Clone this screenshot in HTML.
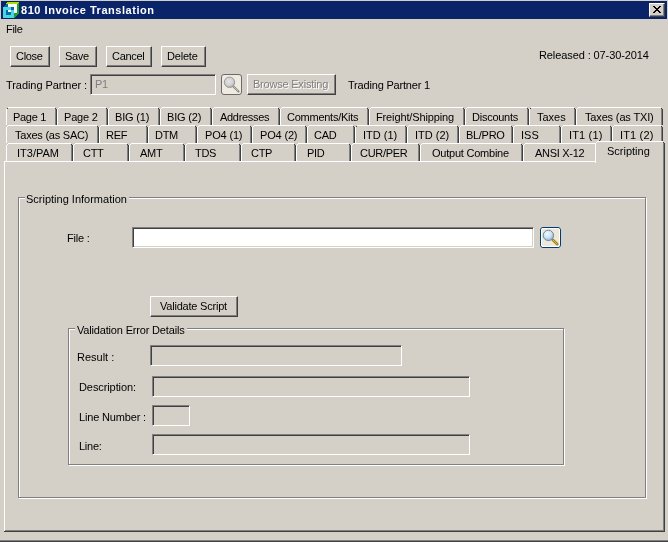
<!DOCTYPE html>
<html><head><meta charset="utf-8"><style>
html,body{margin:0;padding:0;}
html{background:#D4D0C8;overflow:hidden;}
body{width:668px;height:542px;overflow:hidden;background:#D4D0C8;position:relative;font-family:'Liberation Sans',sans-serif;font-size:11px;}
body>*{position:absolute;box-sizing:border-box;}
.t{white-space:pre;line-height:13px;font-size:11px;will-change:transform;}
.btn{background:#D4D0C8;border-top:1px solid #fff;border-left:1px solid #fff;border-right:1px solid #404040;border-bottom:1px solid #404040;box-shadow:inset -1px -1px 0 #808080;}
.fld{border-top:1px solid #808080;border-left:1px solid #808080;border-right:1px solid #fff;border-bottom:1px solid #fff;box-shadow:inset 1px 1px 0 #404040, inset -1px -1px 0 #D4D0C8;}
.tab{background:#D4D0C8;border-top:1px solid #fff;border-left:1px solid #fff;border-right:1px solid #404040;box-shadow:inset -1px 0 0 #808080;border-top-left-radius:2px;}
.panel{background:#D4D0C8;border-top:1px solid #fff;border-left:1px solid #fff;border-right:1px solid #404040;border-bottom:1px solid #404040;box-shadow:inset -1px -1px 0 #808080;}
</style></head><body>
<div style="left:1px;top:1px;width:666px;height:18px;background:#0A246A;"></div>
<svg style="left:3px;top:2px" width="16" height="16" viewBox="3 2 16 16" shape-rendering="crispEdges">
<polygon points="7,2 19,2 17,4 5,4" fill="#A8E000"/>
<polygon points="17,4 19,2 19,13 14,18 14,13 17,13" fill="#18A030"/>
<rect x="8" y="4" width="9" height="9" fill="#fff"/>
<polygon points="3,7 6,4 8,4 8,7" fill="#0868A8"/>
<rect x="3" y="7" width="11" height="11" fill="#48D8E0"/>
<rect x="6" y="10" width="5" height="5" fill="#0868A8"/>
<rect x="8" y="10" width="3" height="2" fill="#fff"/>
<rect x="11" y="7" width="3" height="3" fill="#0868A8"/>
</svg>
<span class="t" style="left:21.0px;top:4px;color:#fff;font-weight:bold;letter-spacing:0.545px;">810 Invoice Translation</span>
<div class="btn" style="left:649px;top:3px;width:16px;height:14px"></div>
<svg style="left:649px;top:3px" width="16" height="14" viewBox="0 0 16 14" shape-rendering="crispEdges">
<path d="M4 3h2v1h1v1h2v-1h1v-1h2v1h-1v1h-1v1h-1v1h1v1h1v1h1v1h-2v-1h-1v-1h-2v1h-1v1h-2v-1h1v-1h1v-1h1v-1h-1v-1h-1v-1h-1z" fill="#000"/>
</svg>
<div style="left:0px;top:540px;width:668px;height:1px;background:#808080;"></div>
<div style="left:0px;top:541px;width:668px;height:1px;background:#404040;"></div>
<span class="t" style="left:5.95px;top:23px;color:#000;letter-spacing:-0.300px;">File</span>
<div class="btn" style="left:10px;top:46px;width:40px;height:21px"></div>
<span class="t" style="left:15.6px;top:50px;color:#000;letter-spacing:-0.300px;">Close</span>
<div class="btn" style="left:59px;top:46px;width:38px;height:21px"></div>
<span class="t" style="left:64.95px;top:50px;color:#000;letter-spacing:-0.300px;">Save</span>
<div class="btn" style="left:106px;top:46px;width:46px;height:21px"></div>
<span class="t" style="left:111.75px;top:50px;color:#000;letter-spacing:-0.300px;">Cancel</span>
<div class="btn" style="left:161px;top:46px;width:45px;height:21px"></div>
<span class="t" style="left:167.0px;top:50px;color:#000;letter-spacing:-0.200px;">Delete</span>
<span class="t" style="left:539.0px;top:49px;color:#000;letter-spacing:-0.100px;">Released : 07-30-2014</span>
<span class="t" style="left:6.0px;top:79px;color:#000;letter-spacing:-0.062px;">Trading Partner :</span>
<div class="fld" style="left:90px;top:74px;width:126px;height:21px;background:#D4D0C8"></div>
<span class="t" style="left:94.65px;top:78px;color:#808080;letter-spacing:-0.300px;">P1</span>
<svg style="left:221px;top:74px" width="21" height="21" viewBox="0 0 21 21">
<defs><radialGradient id="g1" cx="0.45" cy="0.4" r="0.6"><stop offset="0" stop-color="#E4E4E4"/><stop offset="0.7" stop-color="#CFCFCF"/><stop offset="1" stop-color="#A0A0A0"/></radialGradient></defs>
<rect x="0.5" y="0.5" width="20" height="20" rx="2.5" fill="#EFEBE0" stroke="#6A6A6A"/>
<line x1="12.5" y1="12.5" x2="17.5" y2="17.5" stroke="#8A8A8A" stroke-width="2.2" stroke-linecap="round"/>
<line x1="12.5" y1="12.5" x2="17" y2="17" stroke="#D8D8D8" stroke-width="0.7"/>
<circle cx="8.5" cy="8.3" r="5.2" fill="url(#g1)" stroke="#9A9A9A" stroke-width="1"/>
</svg>
<div class="btn" style="left:247px;top:74px;width:89px;height:21px"></div>
<span class="t" style="left:254.0px;top:79px;color:#fff;letter-spacing:-0.214px;">Browse Existing</span>
<span class="t" style="left:253.0px;top:78px;color:#808080;letter-spacing:-0.214px;">Browse Existing</span>
<span class="t" style="left:348.0px;top:79px;color:#000;letter-spacing:-0.188px;">Trading Partner 1</span>
<div style="left:6px;top:109px;width:1px;height:16px;background:#fff;"></div>
<div style="left:7px;top:108px;width:1px;height:1px;background:#fff;"></div>
<div style="left:8px;top:107px;width:47px;height:1px;background:#fff;"></div>
<div style="left:55px;top:109px;width:1px;height:16px;background:#808080;"></div>
<div style="left:56px;top:109px;width:1px;height:16px;background:#404040;"></div>
<div style="left:55px;top:108px;width:1px;height:1px;background:#404040;"></div>
<span class="t" style="left:12.75px;top:111px;color:#000;letter-spacing:-0.300px;">Page 1</span>
<div style="left:57px;top:109px;width:1px;height:16px;background:#fff;"></div>
<div style="left:58px;top:108px;width:1px;height:1px;background:#fff;"></div>
<div style="left:59px;top:107px;width:47px;height:1px;background:#fff;"></div>
<div style="left:106px;top:109px;width:1px;height:16px;background:#808080;"></div>
<div style="left:107px;top:109px;width:1px;height:16px;background:#404040;"></div>
<div style="left:106px;top:108px;width:1px;height:1px;background:#404040;"></div>
<span class="t" style="left:64.0px;top:111px;color:#000;letter-spacing:-0.200px;">Page 2</span>
<div style="left:108px;top:109px;width:1px;height:16px;background:#fff;"></div>
<div style="left:109px;top:108px;width:1px;height:1px;background:#fff;"></div>
<div style="left:110px;top:107px;width:48px;height:1px;background:#fff;"></div>
<div style="left:158px;top:109px;width:1px;height:16px;background:#808080;"></div>
<div style="left:159px;top:109px;width:1px;height:16px;background:#404040;"></div>
<div style="left:158px;top:108px;width:1px;height:1px;background:#404040;"></div>
<span class="t" style="left:115.0px;top:111px;color:#000;letter-spacing:-0.167px;">BIG (1)</span>
<div style="left:160px;top:109px;width:1px;height:16px;background:#fff;"></div>
<div style="left:161px;top:108px;width:1px;height:1px;background:#fff;"></div>
<div style="left:162px;top:107px;width:48px;height:1px;background:#fff;"></div>
<div style="left:210px;top:109px;width:1px;height:16px;background:#808080;"></div>
<div style="left:211px;top:109px;width:1px;height:16px;background:#404040;"></div>
<div style="left:210px;top:108px;width:1px;height:1px;background:#404040;"></div>
<span class="t" style="left:167.0px;top:111px;color:#000;letter-spacing:-0.167px;">BIG (2)</span>
<div style="left:212px;top:109px;width:1px;height:16px;background:#fff;"></div>
<div style="left:213px;top:108px;width:1px;height:1px;background:#fff;"></div>
<div style="left:214px;top:107px;width:64px;height:1px;background:#fff;"></div>
<div style="left:278px;top:109px;width:1px;height:16px;background:#808080;"></div>
<div style="left:279px;top:109px;width:1px;height:16px;background:#404040;"></div>
<div style="left:278px;top:108px;width:1px;height:1px;background:#404040;"></div>
<span class="t" style="left:219.7px;top:111px;color:#000;letter-spacing:-0.300px;">Addresses</span>
<div style="left:280px;top:109px;width:1px;height:16px;background:#fff;"></div>
<div style="left:281px;top:108px;width:1px;height:1px;background:#fff;"></div>
<div style="left:282px;top:107px;width:85px;height:1px;background:#fff;"></div>
<div style="left:367px;top:109px;width:1px;height:16px;background:#808080;"></div>
<div style="left:368px;top:109px;width:1px;height:16px;background:#404040;"></div>
<div style="left:367px;top:108px;width:1px;height:1px;background:#404040;"></div>
<span class="t" style="left:287.0px;top:111px;color:#000;letter-spacing:-0.250px;">Comments/Kits</span>
<div style="left:369px;top:109px;width:1px;height:16px;background:#fff;"></div>
<div style="left:370px;top:108px;width:1px;height:1px;background:#fff;"></div>
<div style="left:371px;top:107px;width:92px;height:1px;background:#fff;"></div>
<div style="left:463px;top:109px;width:1px;height:16px;background:#808080;"></div>
<div style="left:464px;top:109px;width:1px;height:16px;background:#404040;"></div>
<div style="left:463px;top:108px;width:1px;height:1px;background:#404040;"></div>
<span class="t" style="left:376.0px;top:111px;color:#000;letter-spacing:-0.133px;">Freight/Shipping</span>
<div style="left:465px;top:109px;width:1px;height:16px;background:#fff;"></div>
<div style="left:466px;top:108px;width:1px;height:1px;background:#fff;"></div>
<div style="left:467px;top:107px;width:60px;height:1px;background:#fff;"></div>
<div style="left:527px;top:109px;width:1px;height:16px;background:#808080;"></div>
<div style="left:528px;top:109px;width:1px;height:16px;background:#404040;"></div>
<div style="left:527px;top:108px;width:1px;height:1px;background:#404040;"></div>
<span class="t" style="left:472.0px;top:111px;color:#000;letter-spacing:-0.250px;">Discounts</span>
<div style="left:529px;top:109px;width:1px;height:16px;background:#fff;"></div>
<div style="left:530px;top:108px;width:1px;height:1px;background:#fff;"></div>
<div style="left:531px;top:107px;width:43px;height:1px;background:#fff;"></div>
<div style="left:574px;top:109px;width:1px;height:16px;background:#808080;"></div>
<div style="left:575px;top:109px;width:1px;height:16px;background:#404040;"></div>
<div style="left:574px;top:108px;width:1px;height:1px;background:#404040;"></div>
<span class="t" style="left:537.0px;top:111px;color:#000;letter-spacing:0.000px;">Taxes</span>
<div style="left:576px;top:109px;width:1px;height:16px;background:#fff;"></div>
<div style="left:577px;top:108px;width:1px;height:1px;background:#fff;"></div>
<div style="left:578px;top:107px;width:83px;height:1px;background:#fff;"></div>
<div style="left:661px;top:109px;width:1px;height:16px;background:#808080;"></div>
<div style="left:662px;top:109px;width:1px;height:16px;background:#404040;"></div>
<div style="left:661px;top:108px;width:1px;height:1px;background:#404040;"></div>
<span class="t" style="left:585.0px;top:111px;color:#000;letter-spacing:-0.154px;">Taxes (as TXI)</span>
<div style="left:6px;top:127px;width:1px;height:16px;background:#fff;"></div>
<div style="left:7px;top:126px;width:1px;height:1px;background:#fff;"></div>
<div style="left:8px;top:125px;width:89px;height:1px;background:#fff;"></div>
<div style="left:97px;top:127px;width:1px;height:16px;background:#808080;"></div>
<div style="left:98px;top:127px;width:1px;height:16px;background:#404040;"></div>
<div style="left:97px;top:126px;width:1px;height:1px;background:#404040;"></div>
<span class="t" style="left:15.0px;top:129px;color:#000;letter-spacing:-0.231px;">Taxes (as SAC)</span>
<div style="left:99px;top:127px;width:1px;height:16px;background:#fff;"></div>
<div style="left:100px;top:126px;width:1px;height:1px;background:#fff;"></div>
<div style="left:101px;top:125px;width:45px;height:1px;background:#fff;"></div>
<div style="left:146px;top:127px;width:1px;height:16px;background:#808080;"></div>
<div style="left:147px;top:127px;width:1px;height:16px;background:#404040;"></div>
<div style="left:146px;top:126px;width:1px;height:1px;background:#404040;"></div>
<span class="t" style="left:105.8px;top:129px;color:#000;letter-spacing:-0.300px;">REF</span>
<div style="left:148px;top:127px;width:1px;height:16px;background:#fff;"></div>
<div style="left:149px;top:126px;width:1px;height:1px;background:#fff;"></div>
<div style="left:150px;top:125px;width:45px;height:1px;background:#fff;"></div>
<div style="left:195px;top:127px;width:1px;height:16px;background:#808080;"></div>
<div style="left:196px;top:127px;width:1px;height:16px;background:#404040;"></div>
<div style="left:195px;top:126px;width:1px;height:1px;background:#404040;"></div>
<span class="t" style="left:155.3px;top:129px;color:#000;letter-spacing:-0.300px;">DTM</span>
<div style="left:197px;top:127px;width:1px;height:16px;background:#fff;"></div>
<div style="left:198px;top:126px;width:1px;height:1px;background:#fff;"></div>
<div style="left:199px;top:125px;width:51px;height:1px;background:#fff;"></div>
<div style="left:250px;top:127px;width:1px;height:16px;background:#808080;"></div>
<div style="left:251px;top:127px;width:1px;height:16px;background:#404040;"></div>
<div style="left:250px;top:126px;width:1px;height:1px;background:#404040;"></div>
<span class="t" style="left:205.0px;top:129px;color:#000;letter-spacing:-0.167px;">PO4 (1)</span>
<div style="left:252px;top:127px;width:1px;height:16px;background:#fff;"></div>
<div style="left:253px;top:126px;width:1px;height:1px;background:#fff;"></div>
<div style="left:254px;top:125px;width:51px;height:1px;background:#fff;"></div>
<div style="left:305px;top:127px;width:1px;height:16px;background:#808080;"></div>
<div style="left:306px;top:127px;width:1px;height:16px;background:#404040;"></div>
<div style="left:305px;top:126px;width:1px;height:1px;background:#404040;"></div>
<span class="t" style="left:260.0px;top:129px;color:#000;letter-spacing:-0.167px;">PO4 (2)</span>
<div style="left:307px;top:127px;width:1px;height:16px;background:#fff;"></div>
<div style="left:308px;top:126px;width:1px;height:1px;background:#fff;"></div>
<div style="left:309px;top:125px;width:44px;height:1px;background:#fff;"></div>
<div style="left:353px;top:127px;width:1px;height:16px;background:#808080;"></div>
<div style="left:354px;top:127px;width:1px;height:16px;background:#404040;"></div>
<div style="left:353px;top:126px;width:1px;height:1px;background:#404040;"></div>
<span class="t" style="left:314.3px;top:129px;color:#000;letter-spacing:-0.300px;">CAD</span>
<div style="left:355px;top:127px;width:1px;height:16px;background:#fff;"></div>
<div style="left:356px;top:126px;width:1px;height:1px;background:#fff;"></div>
<div style="left:357px;top:125px;width:48px;height:1px;background:#fff;"></div>
<div style="left:405px;top:127px;width:1px;height:16px;background:#808080;"></div>
<div style="left:406px;top:127px;width:1px;height:16px;background:#404040;"></div>
<div style="left:405px;top:126px;width:1px;height:1px;background:#404040;"></div>
<span class="t" style="left:363.0px;top:129px;color:#000;letter-spacing:0.000px;">ITD (1)</span>
<div style="left:407px;top:127px;width:1px;height:16px;background:#fff;"></div>
<div style="left:408px;top:126px;width:1px;height:1px;background:#fff;"></div>
<div style="left:409px;top:125px;width:48px;height:1px;background:#fff;"></div>
<div style="left:457px;top:127px;width:1px;height:16px;background:#808080;"></div>
<div style="left:458px;top:127px;width:1px;height:16px;background:#404040;"></div>
<div style="left:457px;top:126px;width:1px;height:1px;background:#404040;"></div>
<span class="t" style="left:415.0px;top:129px;color:#000;letter-spacing:0.000px;">ITD (2)</span>
<div style="left:459px;top:127px;width:1px;height:16px;background:#fff;"></div>
<div style="left:460px;top:126px;width:1px;height:1px;background:#fff;"></div>
<div style="left:461px;top:125px;width:50px;height:1px;background:#fff;"></div>
<div style="left:511px;top:127px;width:1px;height:16px;background:#808080;"></div>
<div style="left:512px;top:127px;width:1px;height:16px;background:#404040;"></div>
<div style="left:511px;top:126px;width:1px;height:1px;background:#404040;"></div>
<span class="t" style="left:465.75px;top:129px;color:#000;letter-spacing:-0.300px;">BL/PRO</span>
<div style="left:513px;top:127px;width:1px;height:16px;background:#fff;"></div>
<div style="left:514px;top:126px;width:1px;height:1px;background:#fff;"></div>
<div style="left:515px;top:125px;width:44px;height:1px;background:#fff;"></div>
<div style="left:559px;top:127px;width:1px;height:16px;background:#808080;"></div>
<div style="left:560px;top:127px;width:1px;height:16px;background:#404040;"></div>
<div style="left:559px;top:126px;width:1px;height:1px;background:#404040;"></div>
<span class="t" style="left:521.0px;top:129px;color:#000;letter-spacing:0.000px;">ISS</span>
<div style="left:561px;top:127px;width:1px;height:16px;background:#fff;"></div>
<div style="left:562px;top:126px;width:1px;height:1px;background:#fff;"></div>
<div style="left:563px;top:125px;width:47px;height:1px;background:#fff;"></div>
<div style="left:610px;top:127px;width:1px;height:16px;background:#808080;"></div>
<div style="left:611px;top:127px;width:1px;height:16px;background:#404040;"></div>
<div style="left:610px;top:126px;width:1px;height:1px;background:#404040;"></div>
<span class="t" style="left:569.0px;top:129px;color:#000;letter-spacing:0.167px;">IT1 (1)</span>
<div style="left:612px;top:127px;width:1px;height:16px;background:#fff;"></div>
<div style="left:613px;top:126px;width:1px;height:1px;background:#fff;"></div>
<div style="left:614px;top:125px;width:47px;height:1px;background:#fff;"></div>
<div style="left:661px;top:127px;width:1px;height:16px;background:#808080;"></div>
<div style="left:662px;top:127px;width:1px;height:16px;background:#404040;"></div>
<div style="left:661px;top:126px;width:1px;height:1px;background:#404040;"></div>
<span class="t" style="left:620.0px;top:129px;color:#000;letter-spacing:0.167px;">IT1 (2)</span>
<div style="left:6px;top:145px;width:1px;height:16px;background:#fff;"></div>
<div style="left:7px;top:144px;width:1px;height:1px;background:#fff;"></div>
<div style="left:8px;top:143px;width:63px;height:1px;background:#fff;"></div>
<div style="left:71px;top:145px;width:1px;height:16px;background:#808080;"></div>
<div style="left:72px;top:145px;width:1px;height:16px;background:#404040;"></div>
<div style="left:71px;top:144px;width:1px;height:1px;background:#404040;"></div>
<span class="t" style="left:17.0px;top:147px;color:#000;letter-spacing:0.000px;">IT3/PAM</span>
<div style="left:73px;top:145px;width:1px;height:16px;background:#fff;"></div>
<div style="left:74px;top:144px;width:1px;height:1px;background:#fff;"></div>
<div style="left:75px;top:143px;width:52px;height:1px;background:#fff;"></div>
<div style="left:127px;top:145px;width:1px;height:16px;background:#808080;"></div>
<div style="left:128px;top:145px;width:1px;height:16px;background:#404040;"></div>
<div style="left:127px;top:144px;width:1px;height:1px;background:#404040;"></div>
<span class="t" style="left:82.8px;top:147px;color:#000;letter-spacing:-0.300px;">CTT</span>
<div style="left:129px;top:145px;width:1px;height:16px;background:#fff;"></div>
<div style="left:130px;top:144px;width:1px;height:1px;background:#fff;"></div>
<div style="left:131px;top:143px;width:52px;height:1px;background:#fff;"></div>
<div style="left:183px;top:145px;width:1px;height:16px;background:#808080;"></div>
<div style="left:184px;top:145px;width:1px;height:16px;background:#404040;"></div>
<div style="left:183px;top:144px;width:1px;height:1px;background:#404040;"></div>
<span class="t" style="left:139.8px;top:147px;color:#000;letter-spacing:-0.300px;">AMT</span>
<div style="left:185px;top:145px;width:1px;height:16px;background:#fff;"></div>
<div style="left:186px;top:144px;width:1px;height:1px;background:#fff;"></div>
<div style="left:187px;top:143px;width:52px;height:1px;background:#fff;"></div>
<div style="left:239px;top:145px;width:1px;height:16px;background:#808080;"></div>
<div style="left:240px;top:145px;width:1px;height:16px;background:#404040;"></div>
<div style="left:239px;top:144px;width:1px;height:1px;background:#404040;"></div>
<span class="t" style="left:195.3px;top:147px;color:#000;letter-spacing:-0.300px;">TDS</span>
<div style="left:241px;top:145px;width:1px;height:16px;background:#fff;"></div>
<div style="left:242px;top:144px;width:1px;height:1px;background:#fff;"></div>
<div style="left:243px;top:143px;width:51px;height:1px;background:#fff;"></div>
<div style="left:294px;top:145px;width:1px;height:16px;background:#808080;"></div>
<div style="left:295px;top:145px;width:1px;height:16px;background:#404040;"></div>
<div style="left:294px;top:144px;width:1px;height:1px;background:#404040;"></div>
<span class="t" style="left:250.8px;top:147px;color:#000;letter-spacing:-0.300px;">CTP</span>
<div style="left:296px;top:145px;width:1px;height:16px;background:#fff;"></div>
<div style="left:297px;top:144px;width:1px;height:1px;background:#fff;"></div>
<div style="left:298px;top:143px;width:51px;height:1px;background:#fff;"></div>
<div style="left:349px;top:145px;width:1px;height:16px;background:#808080;"></div>
<div style="left:350px;top:145px;width:1px;height:16px;background:#404040;"></div>
<div style="left:349px;top:144px;width:1px;height:1px;background:#404040;"></div>
<span class="t" style="left:306.8px;top:147px;color:#000;letter-spacing:-0.300px;">PID</span>
<div style="left:351px;top:145px;width:1px;height:16px;background:#fff;"></div>
<div style="left:352px;top:144px;width:1px;height:1px;background:#fff;"></div>
<div style="left:353px;top:143px;width:65px;height:1px;background:#fff;"></div>
<div style="left:418px;top:145px;width:1px;height:16px;background:#808080;"></div>
<div style="left:419px;top:145px;width:1px;height:16px;background:#404040;"></div>
<div style="left:418px;top:144px;width:1px;height:1px;background:#404040;"></div>
<span class="t" style="left:360.4px;top:147px;color:#000;letter-spacing:-0.300px;">CUR/PER</span>
<div style="left:420px;top:145px;width:1px;height:16px;background:#fff;"></div>
<div style="left:421px;top:144px;width:1px;height:1px;background:#fff;"></div>
<div style="left:422px;top:143px;width:99px;height:1px;background:#fff;"></div>
<div style="left:521px;top:145px;width:1px;height:16px;background:#808080;"></div>
<div style="left:522px;top:145px;width:1px;height:16px;background:#404040;"></div>
<div style="left:521px;top:144px;width:1px;height:1px;background:#404040;"></div>
<span class="t" style="left:432.0px;top:147px;color:#000;letter-spacing:-0.231px;">Output Combine</span>
<div style="left:523px;top:145px;width:1px;height:16px;background:#fff;"></div>
<div style="left:524px;top:144px;width:1px;height:1px;background:#fff;"></div>
<div style="left:525px;top:143px;width:70px;height:1px;background:#fff;"></div>
<div style="left:595px;top:145px;width:1px;height:16px;background:#808080;"></div>
<div style="left:596px;top:145px;width:1px;height:16px;background:#404040;"></div>
<div style="left:595px;top:144px;width:1px;height:1px;background:#404040;"></div>
<span class="t" style="left:534.7px;top:147px;color:#000;letter-spacing:-0.300px;">ANSI X-12</span>
<div style="left:7px;top:108px;width:1px;height:1px;background:#404040;"></div>
<div style="left:530px;top:108px;width:1px;height:1px;background:#404040;"></div>
<div style="left:356px;top:126px;width:1px;height:1px;background:#404040;"></div>
<div style="left:4px;top:161px;width:592px;height:1px;background:#fff;"></div>
<div style="left:4px;top:161px;width:1px;height:370px;background:#fff;"></div>
<div style="left:5px;top:530px;width:659px;height:1px;background:#808080;"></div>
<div style="left:4px;top:531px;width:661px;height:1px;background:#404040;"></div>
<div style="left:663px;top:162px;width:1px;height:369px;background:#808080;"></div>
<div style="left:664px;top:161px;width:1px;height:371px;background:#404040;"></div>
<div style="left:596px;top:142px;width:68px;height:21px;background:#D4D0C8;"></div>
<div style="left:597px;top:141px;width:66px;height:1px;background:#D4D0C8;"></div>
<div style="left:595px;top:143px;width:1px;height:20px;background:#fff;"></div>
<div style="left:596px;top:142px;width:1px;height:1px;background:#fff;"></div>
<div style="left:597px;top:141px;width:66px;height:1px;background:#fff;"></div>
<div style="left:663px;top:143px;width:1px;height:20px;background:#808080;"></div>
<div style="left:664px;top:143px;width:1px;height:20px;background:#404040;"></div>
<div style="left:663px;top:142px;width:1px;height:1px;background:#404040;"></div>
<span class="t" style="left:607.0px;top:145px;color:#000;letter-spacing:0.000px;">Scripting</span>
<div style="left:19px;top:198px;width:628px;height:301px;border:1px solid #fff"></div>
<div style="left:18px;top:197px;width:628px;height:301px;border:1px solid #808080"></div>
<div style="left:25px;top:197px;width:104px;height:2px;background:#D4D0C8;"></div>
<span class="t" style="left:26.0px;top:193px;color:#000;letter-spacing:0.000px;">Scripting Information</span>
<span class="t" style="left:67.0px;top:232px;color:#000;letter-spacing:-0.200px;">File :</span>
<div class="fld" style="left:132px;top:227px;width:402px;height:21px;background:#fff"></div>
<svg style="left:540px;top:227px" width="21" height="21" viewBox="0 0 21 21">
<defs><radialGradient id="g2" cx="0.4" cy="0.35" r="0.65"><stop offset="0" stop-color="#F4FAFF"/><stop offset="0.6" stop-color="#C8E0F4"/><stop offset="1" stop-color="#90B0D0"/></radialGradient></defs>
<rect x="0.5" y="0.5" width="20" height="20" rx="2.5" fill="#ECE9D8" stroke="#003C74"/>
<rect x="1.5" y="1.5" width="18" height="18" rx="1.5" fill="none" stroke="#FFFDF4" stroke-width="1"/>
<line x1="12.8" y1="12.8" x2="17.2" y2="17.2" stroke="#806010" stroke-width="2.6" stroke-linecap="round"/>
<line x1="12.8" y1="12.8" x2="17.2" y2="17.2" stroke="#E8C040" stroke-width="1.2" stroke-linecap="round"/>
<circle cx="8.4" cy="8.4" r="5.2" fill="url(#g2)" stroke="#7088A8" stroke-width="1"/>
</svg>
<div class="btn" style="left:150px;top:296px;width:88px;height:21px"></div>
<span class="t" style="left:160.0px;top:300px;color:#000;letter-spacing:-0.214px;">Validate Script</span>
<div style="left:69px;top:329px;width:496px;height:137px;border:1px solid #fff"></div>
<div style="left:68px;top:328px;width:496px;height:137px;border:1px solid #808080"></div>
<div style="left:75px;top:328px;width:112px;height:2px;background:#D4D0C8;"></div>
<span class="t" style="left:77.0px;top:324px;color:#000;letter-spacing:-0.174px;">Validation Error Details</span>
<span class="t" style="left:77.0px;top:351px;color:#000;letter-spacing:0.000px;">Result :</span>
<div class="fld" style="left:150px;top:345px;width:252px;height:21px;background:#D4D0C8"></div>
<span class="t" style="left:79.0px;top:381px;color:#000;letter-spacing:-0.091px;">Description:</span>
<div class="fld" style="left:152px;top:376px;width:318px;height:21px;background:#D4D0C8"></div>
<span class="t" style="left:79.0px;top:411px;color:#000;letter-spacing:-0.167px;">Line Number :</span>
<div class="fld" style="left:152px;top:405px;width:38px;height:21px;background:#D4D0C8"></div>
<span class="t" style="left:79.0px;top:440px;color:#000;letter-spacing:-0.250px;">Line:</span>
<div class="fld" style="left:152px;top:434px;width:318px;height:21px;background:#D4D0C8"></div>
</body></html>
